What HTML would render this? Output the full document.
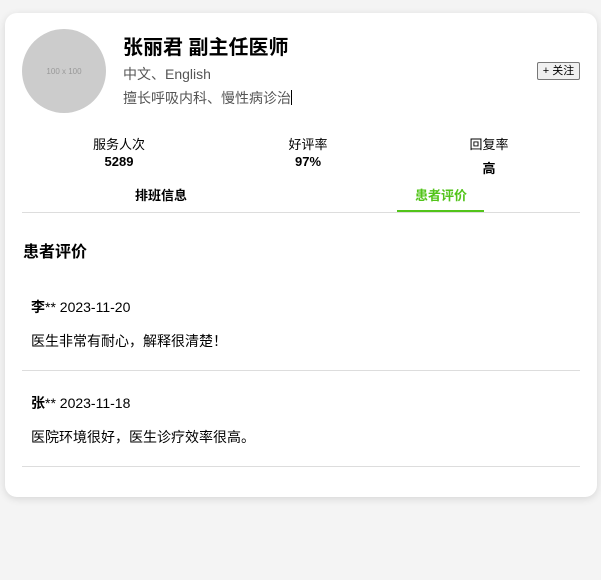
<!DOCTYPE html>
<html><head><meta charset="utf-8"><style>
*{margin:0;padding:0;box-sizing:border-box}
body{width:601px;height:580px;background:#f4f4f4;font-family:"Liberation Sans","Noto Sans CJK SC",sans-serif;color:#000;position:relative;overflow:hidden}
.card{position:absolute;left:5px;top:13px;width:592px;height:484px;background:#fff;border-radius:12px;box-shadow:0 2px 8px rgba(0,0,0,.12)}
.a{position:absolute}
.av{left:22px;top:29px;width:84px;height:84px;border-radius:50%;background:#ccc;color:#999;font-size:8px;display:flex;align-items:center;justify-content:center}
.c{transform:translateX(-50%);white-space:nowrap;font-size:13px}
</style></head><body>
<div class="card"></div>
<div class="a av">100 x 100</div>
<div class="a" style="left:123px;top:31px;font-size:20px;font-weight:bold">张丽君 副主任医师</div>
<div class="a" style="left:123px;top:64px;font-size:14px;color:#555">中文、English</div>
<div class="a" style="left:123px;top:88px;font-size:14px;color:#555">擅长呼吸内科、慢性病诊治<span style="display:inline-block;width:1px;height:15px;background:#000;vertical-align:-2px"></span></div>
<div class="a" style="left:537px;top:62px;width:43px;height:18px;border:1px solid #777;border-radius:2px;background:#f0f0f0;font-size:11px;text-align:center;line-height:16px">+ 关注</div>
<div class="a c" style="left:119px;top:134px">服务人次</div>
<div class="a c" style="left:119px;top:154px;font-weight:bold">5289</div>
<div class="a c" style="left:308px;top:134px">好评率</div>
<div class="a c" style="left:308px;top:154px;font-weight:bold">97%</div>
<div class="a c" style="left:489px;top:134px">回复率</div>
<div class="a c" style="left:489px;top:158px;font-weight:bold">高</div>
<div class="a c" style="left:161px;top:185px;font-weight:bold">排班信息</div>
<div class="a c" style="left:441px;top:185px;font-weight:bold;color:#52c41a">患者评价</div>
<div class="a" style="left:22px;top:212px;width:558px;height:1px;background:#ddd"></div>
<div class="a" style="left:397px;top:210px;width:87px;height:2px;background:#52c41a"></div>
<div class="a" style="left:23px;top:238px;font-size:16px;font-weight:bold">患者评价</div>
<div class="a" style="left:31px;top:297px;font-size:14px"><b>李</b>** 2023-11-20</div>
<div class="a" style="left:31px;top:331px;font-size:14px">医生非常有耐心，解释很清楚！</div>
<div class="a" style="left:22px;top:370px;width:558px;height:1px;background:#ddd"></div>
<div class="a" style="left:31px;top:393px;font-size:14px"><b>张</b>** 2023-11-18</div>
<div class="a" style="left:31px;top:427px;font-size:14px">医院环境很好，医生诊疗效率很高。</div>
<div class="a" style="left:22px;top:466px;width:558px;height:1px;background:#ddd"></div>
</body></html>
